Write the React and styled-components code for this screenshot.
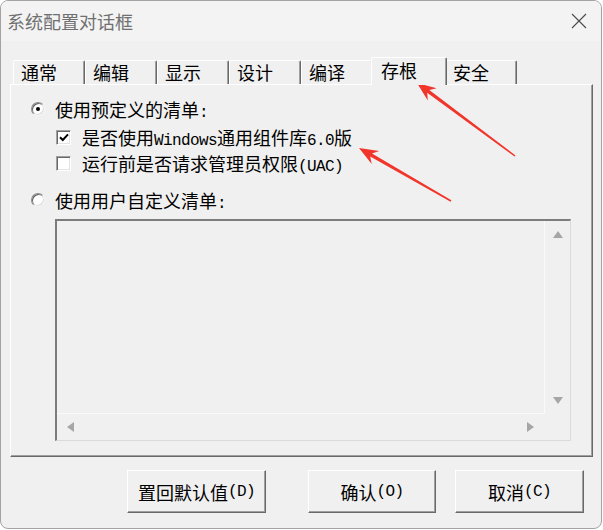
import React from "react";
import styled, { createGlobalStyle } from "styled-components";

const GlobalStyle = createGlobalStyle`
  html, body {
    margin: 0;
    padding: 0;
    background: #ffffff;
  }
  body {
    font-family: "Noto Sans CJK SC", "Noto Sans", sans-serif;
    color: #000;
  }
`;

const Page = styled.div`
  position: relative;
  width: 603px;
  height: 530px;
`;

const Window = styled.div`
  width: 602px;
  height: 529px;
  box-sizing: border-box;
  border: 1px solid #a3a3a3;
  border-radius: 8px;
  background: #f0f0f0;
  overflow: hidden;
  display: flex;
  flex-direction: column;
`;

const TitleBar = styled.div`
  height: 40px;
  flex-shrink: 0;
  display: flex;
  align-items: center;
  justify-content: space-between;
  padding: 0 14px 0 6px;
  background: #f3f3f3;
`;

const Title = styled.span`
  font-size: 18px;
  color: #707070;
`;

const Body = styled.div`
  flex: 1;
  display: flex;
  flex-direction: column;
  padding: 16px 8px 0 9px;
`;

const TabStrip = styled.div`
  position: relative;
  z-index: 1;
  height: 28px;
  display: flex;
  align-items: flex-end;
  padding-left: 3px;
`;

const Tab = styled.div`
  position: relative;
  box-sizing: border-box;
  width: ${(p) => (p.$active ? 76 : 72)}px;
  height: ${(p) => (p.$active ? 28 : 24)}px;
  margin: 0 ${(p) => (p.$active ? -2 : 0)}px ${(p) => (p.$active ? 0 : 1)}px;
  z-index: ${(p) => (p.$active ? 2 : 1)};
  padding-left: ${(p) => (p.$active ? 9 : 7)}px;
  background: #f0f0f0;
  border-top: 1px solid #ffffff;
  border-left: 1px solid #ffffff;
  border-right: 1px solid #696969;
  border-radius: 2px 2px 0 0;
  box-shadow: inset -1px 0 0 #a0a0a0;
  font-size: 18px;
  line-height: ${(p) => (p.$active ? 24 : 22)}px;
  white-space: nowrap;
`;

const Panel = styled.div`
  box-sizing: border-box;
  height: 373px;
  margin-top: -1px;
  border: 1px solid;
  border-color: #ffffff #696969 #696969 #ffffff;
  box-shadow: inset -1px -1px 0 #a0a0a0;
  padding: 11px 20px 0 20px;
  display: flex;
  flex-direction: column;
`;

const OptionRow = styled.div`
  display: flex;
  align-items: center;
  height: 26px;
  margin-top: ${(p) => p.$top || 0}px;
  margin-left: ${(p) => p.$indent || 0}px;
  gap: ${(p) => p.$gap || 10}px;
  font-size: 18px;
  white-space: nowrap;
`;

const Radio = styled.span`
  position: relative;
  box-sizing: border-box;
  width: 14px;
  height: 14px;
  flex-shrink: 0;
  border-radius: 50%;
  border: 1px solid;
  border-color: #8a8a8a #f4f4f4 #f4f4f4 #8a8a8a;
  box-shadow: inset 1px 1px 0 #5f5f5f, inset -1px -1px 0 #dcdcdc;
  background: #ffffff;

  &::after {
    content: "";
    display: ${(p) => (p.$checked ? "block" : "none")};
    position: absolute;
    left: 4px;
    top: 4px;
    width: 4px;
    height: 4px;
    border-radius: 50%;
    background: #000;
  }
`;

const CheckBox = styled.span`
  box-sizing: border-box;
  width: 15px;
  height: 15px;
  flex-shrink: 0;
  display: flex;
  align-items: center;
  justify-content: center;
  border: 1px solid;
  border-color: #a0a0a0 #ffffff #ffffff #a0a0a0;
  box-shadow: inset 1px 1px 0 #696969, inset -1px -1px 0 #e3e3e3;
  background: #ffffff;
`;

const Half = styled.span`
  font-family: "Liberation Mono", "DejaVu Sans Mono", monospace;
  font-size: 16px;
  letter-spacing: -0.6px;
`;

const ListBox = styled.div`
  box-sizing: border-box;
  width: 516px;
  height: 222px;
  margin: 6px 0 0 24px;
  border-top: 2px solid #7c7c7c;
  border-left: 2px solid #7c7c7c;
  border-right: 1px solid #dadada;
  border-bottom: 1px solid #dadada;
  display: grid;
  grid-template-columns: 1fr 25px;
  grid-template-rows: 1fr 26px;
`;

const ListArea = styled.div`
  border-right: 1px solid #fafafa;
  border-bottom: 1px solid #fafafa;
`;

const VScroll = styled.div`
  display: flex;
  flex-direction: column;
  align-items: center;
  justify-content: space-between;
  padding: 9px 0 9px;
`;

const HScroll = styled.div`
  display: flex;
  align-items: center;
  justify-content: space-between;
  padding: 0 10px 0 9px;
`;

const ButtonRow = styled.div`
  display: flex;
  justify-content: flex-end;
  margin-top: 13px;
  padding-right: 9px;
`;

const Button = styled.div`
  box-sizing: border-box;
  width: ${(p) => p.$w}px;
  height: 43px;
  margin-left: ${(p) => p.$gap || 0}px;
  display: flex;
  align-items: center;
  justify-content: center;
  border: 1px solid;
  border-color: #ffffff #696969 #696969 #ffffff;
  box-shadow: inset -1px -1px 0 #a0a0a0;
  background: #f0f0f0;
  font-size: 18px;
  white-space: nowrap;
`;

const Overlay = styled.svg`
  position: absolute;
  left: 0;
  top: 0;
  pointer-events: none;
`;

const Tri = ({ dir }) => {
  const pts = {
    up: "0,8 5,1 10,8",
    down: "0,1 5,8 10,1",
    left: "8,0 1,5 8,10",
    right: "1,0 8,5 1,10",
  }[dir];
  const vertical = dir === "up" || dir === "down";
  return (
    <svg width={vertical ? 10 : 9} height={vertical ? 9 : 10}>
      <polygon points={pts} fill="#a6a6a6" />
    </svg>
  );
};

function arrowPoints(tail, tip) {
  const dx = tip[0] - tail[0];
  const dy = tip[1] - tail[1];
  const len = Math.hypot(dx, dy);
  const ux = dx / len;
  const uy = dy / len;
  const nx = -uy;
  const ny = ux;
  const at = (d, w) => [tip[0] - ux * d + nx * w, tip[1] - uy * d + ny * w];
  const pts = [
    [tail[0] + nx * 0.8, tail[1] + ny * 0.8],
    at(14, 1.8),
    at(19, 7.5),
    tip,
    at(19, -7.5),
    at(14, -1.8),
    [tail[0] - nx * 0.8, tail[1] - ny * 0.8],
  ];
  return pts.map((p) => p[0].toFixed(1) + "," + p[1].toFixed(1)).join(" ");
}

const tabs = ["通常", "编辑", "显示", "设计", "编译", "存根", "安全"];

export default function App() {
  return (
    <Page>
      <GlobalStyle />
      <Window>
        <TitleBar>
          <Title>系统配置对话框</Title>
          <svg width="16" height="16" viewBox="0 0 16 16">
            <path d="M1 1 L15 15 M15 1 L1 15" stroke="#4a4a4a" strokeWidth="1.1" />
          </svg>
        </TitleBar>
        <Body>
          <TabStrip>
            {tabs.map((t) => (
              <Tab key={t} $active={t === "存根"}>
                {t}
              </Tab>
            ))}
          </TabStrip>
          <Panel>
            <OptionRow>
              <Radio $checked />
              <span>
                使用预定义的清单<Half>:</Half>
              </span>
            </OptionRow>
            <OptionRow $top={2} $indent={25} $gap={11}>
              <CheckBox>
                <svg width="10" height="9" viewBox="0 0 10 9">
                  <path d="M1 4.2 L3.8 7 L9 1.4" stroke="#000" strokeWidth="2" fill="none" />
                </svg>
              </CheckBox>
              <span>
                是否使用<Half>Windows</Half>通用组件库<Half>6.0</Half>版
              </span>
            </OptionRow>
            <OptionRow $indent={25} $gap={11}>
              <CheckBox />
              <span>
                运行前是否请求管理员权限<Half>(UAC)</Half>
              </span>
            </OptionRow>
            <OptionRow $top={11}>
              <Radio />
              <span>
                使用用户自定义清单<Half>:</Half>
              </span>
            </OptionRow>
            <ListBox>
              <ListArea />
              <VScroll>
                <Tri dir="up" />
                <Tri dir="down" />
              </VScroll>
              <HScroll>
                <Tri dir="left" />
                <Tri dir="right" />
              </HScroll>
              <div />
            </ListBox>
          </Panel>
          <ButtonRow>
            <Button $w={139}>
              置回默认值<Half>(D)</Half>
            </Button>
            <Button $w={128} $gap={42}>
              确认<Half>(O)</Half>
            </Button>
            <Button $w={129} $gap={19}>
              取消<Half>(C)</Half>
            </Button>
          </ButtonRow>
        </Body>
      </Window>
      <Overlay width="603" height="530">
        <polygon points={arrowPoints([515, 156], [417, 83])} fill="#f1352b" />
        <polygon points={arrowPoints([451, 201], [359, 148])} fill="#f1352b" />
      </Overlay>
    </Page>
  );
}
